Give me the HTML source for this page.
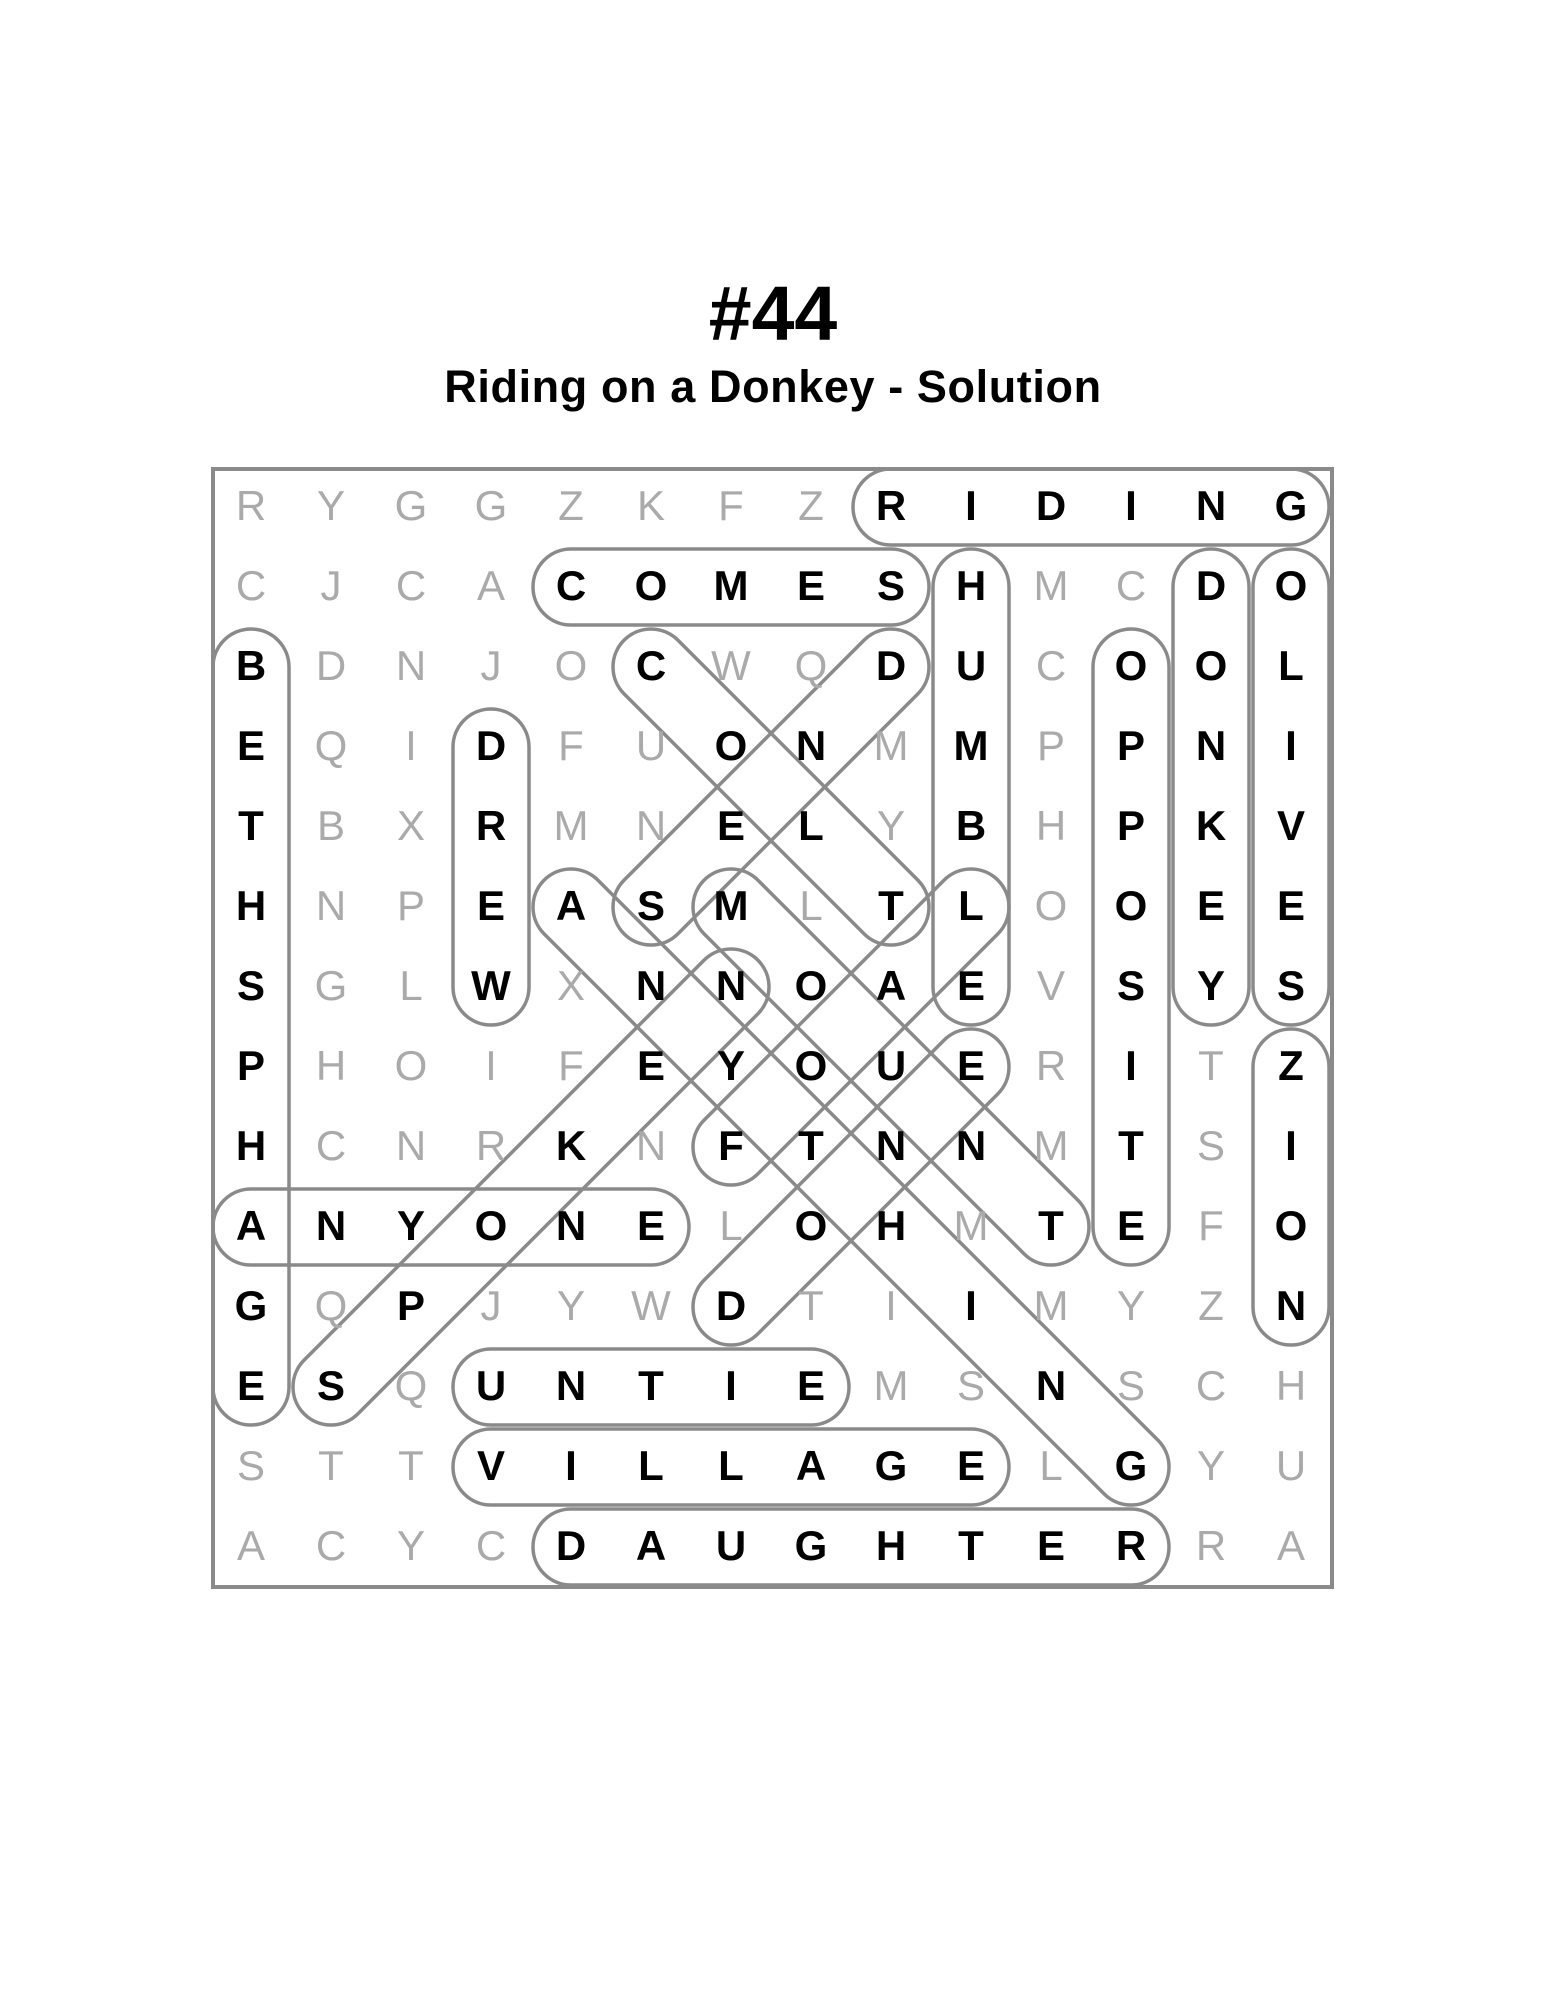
<!DOCTYPE html>
<html><head><meta charset="utf-8"><style>
html,body{margin:0;padding:0;background:#fff;}
svg{display:block;}
</style></head><body>
<svg width="1545" height="2000" viewBox="0 0 1545 2000" xmlns="http://www.w3.org/2000/svg">
<text x="773" y="340" text-anchor="middle" font-family="Liberation Sans, sans-serif" font-weight="bold" font-size="77" fill="#000">#44</text>
<text x="773" y="402" text-anchor="middle" font-family="Liberation Sans, sans-serif" font-weight="bold" font-size="45" letter-spacing="0.6" fill="#000">Riding on a Donkey - Solution</text>
<rect x="213" y="469" width="1119" height="1118" fill="none" stroke="#8a8a8a" stroke-width="4"/>
<g transform="translate(-2,-2)">
<g fill="none" stroke="#8a8a8a" stroke-width="3.5">
<rect x="-38" y="-38" width="476" height="76" rx="38" transform="translate(893,509)"/>
<rect x="-38" y="-38" width="396" height="76" rx="38" transform="translate(573,589)"/>
<rect x="-38" y="-38" width="476" height="76" rx="38" transform="translate(973,589) rotate(90)"/>
<rect x="-38" y="-38" width="476" height="76" rx="38" transform="translate(1213,589) rotate(90)"/>
<rect x="-38" y="-38" width="476" height="76" rx="38" transform="translate(1293,589) rotate(90)"/>
<rect x="-38" y="-38" width="796" height="76" rx="38" transform="translate(253,669) rotate(90)"/>
<rect x="-38" y="-38" width="636" height="76" rx="38" transform="translate(1133,669) rotate(90)"/>
<rect x="-38" y="-38" width="316" height="76" rx="38" transform="translate(493,749) rotate(90)"/>
<rect x="-38" y="-38" width="316" height="76" rx="38" transform="translate(1293,1069) rotate(90)"/>
<rect x="-38" y="-38" width="476" height="76" rx="38" transform="translate(253,1229)"/>
<rect x="-38" y="-38" width="396" height="76" rx="38" transform="translate(493,1389)"/>
<rect x="-38" y="-38" width="556" height="76" rx="38" transform="translate(493,1469)"/>
<rect x="-38" y="-38" width="636" height="76" rx="38" transform="translate(573,1549)"/>
<rect x="-38" y="-38" width="415.4" height="76" rx="38" transform="translate(653,669) rotate(45)"/>
<rect x="-38" y="-38" width="415.4" height="76" rx="38" transform="translate(653,909) rotate(-45)"/>
<rect x="-38" y="-38" width="641.7" height="76" rx="38" transform="translate(333,1389) rotate(-45)"/>
<rect x="-38" y="-38" width="868" height="76" rx="38" transform="translate(573,909) rotate(45)"/>
<rect x="-38" y="-38" width="528.5" height="76" rx="38" transform="translate(733,909) rotate(45)"/>
<rect x="-38" y="-38" width="415.4" height="76" rx="38" transform="translate(733,1149) rotate(-45)"/>
<rect x="-38" y="-38" width="415.4" height="76" rx="38" transform="translate(733,1309) rotate(-45)"/>
</g>
<g font-family="Liberation Sans, sans-serif" font-size="42" text-anchor="middle" transform="translate(0,-2)">
<text y="524" fill="#aaa"><tspan x="253">R</tspan><tspan x="333">Y</tspan><tspan x="413">G</tspan><tspan x="493">G</tspan><tspan x="573">Z</tspan><tspan x="653">K</tspan><tspan x="733">F</tspan><tspan x="813">Z</tspan></text>
<text y="524" fill="#000" font-weight="bold"><tspan x="893">R</tspan><tspan x="973">I</tspan><tspan x="1053">D</tspan><tspan x="1133">I</tspan><tspan x="1213">N</tspan><tspan x="1293">G</tspan></text>

<text y="604" fill="#aaa"><tspan x="253">C</tspan><tspan x="333">J</tspan><tspan x="413">C</tspan><tspan x="493">A</tspan><tspan x="1053">M</tspan><tspan x="1133">C</tspan></text>
<text y="604" fill="#000" font-weight="bold"><tspan x="573">C</tspan><tspan x="653">O</tspan><tspan x="733">M</tspan><tspan x="813">E</tspan><tspan x="893">S</tspan><tspan x="973">H</tspan><tspan x="1213">D</tspan><tspan x="1293">O</tspan></text>

<text y="684" fill="#aaa"><tspan x="333">D</tspan><tspan x="413">N</tspan><tspan x="493">J</tspan><tspan x="573">O</tspan><tspan x="733">W</tspan><tspan x="813">Q</tspan><tspan x="1053">C</tspan></text>
<text y="684" fill="#000" font-weight="bold"><tspan x="253">B</tspan><tspan x="653">C</tspan><tspan x="893">D</tspan><tspan x="973">U</tspan><tspan x="1133">O</tspan><tspan x="1213">O</tspan><tspan x="1293">L</tspan></text>

<text y="764" fill="#aaa"><tspan x="333">Q</tspan><tspan x="413">I</tspan><tspan x="573">F</tspan><tspan x="653">U</tspan><tspan x="893">M</tspan><tspan x="1053">P</tspan></text>
<text y="764" fill="#000" font-weight="bold"><tspan x="253">E</tspan><tspan x="493">D</tspan><tspan x="733">O</tspan><tspan x="813">N</tspan><tspan x="973">M</tspan><tspan x="1133">P</tspan><tspan x="1213">N</tspan><tspan x="1293">I</tspan></text>

<text y="844" fill="#aaa"><tspan x="333">B</tspan><tspan x="413">X</tspan><tspan x="573">M</tspan><tspan x="653">N</tspan><tspan x="893">Y</tspan><tspan x="1053">H</tspan></text>
<text y="844" fill="#000" font-weight="bold"><tspan x="253">T</tspan><tspan x="493">R</tspan><tspan x="733">E</tspan><tspan x="813">L</tspan><tspan x="973">B</tspan><tspan x="1133">P</tspan><tspan x="1213">K</tspan><tspan x="1293">V</tspan></text>

<text y="924" fill="#aaa"><tspan x="333">N</tspan><tspan x="413">P</tspan><tspan x="813">L</tspan><tspan x="1053">O</tspan></text>
<text y="924" fill="#000" font-weight="bold"><tspan x="253">H</tspan><tspan x="493">E</tspan><tspan x="573">A</tspan><tspan x="653">S</tspan><tspan x="733">M</tspan><tspan x="893">T</tspan><tspan x="973">L</tspan><tspan x="1133">O</tspan><tspan x="1213">E</tspan><tspan x="1293">E</tspan></text>

<text y="1004" fill="#aaa"><tspan x="333">G</tspan><tspan x="413">L</tspan><tspan x="573">X</tspan><tspan x="1053">V</tspan></text>
<text y="1004" fill="#000" font-weight="bold"><tspan x="253">S</tspan><tspan x="493">W</tspan><tspan x="653">N</tspan><tspan x="733">N</tspan><tspan x="813">O</tspan><tspan x="893">A</tspan><tspan x="973">E</tspan><tspan x="1133">S</tspan><tspan x="1213">Y</tspan><tspan x="1293">S</tspan></text>

<text y="1084" fill="#aaa"><tspan x="333">H</tspan><tspan x="413">O</tspan><tspan x="493">I</tspan><tspan x="573">F</tspan><tspan x="1053">R</tspan><tspan x="1213">T</tspan></text>
<text y="1084" fill="#000" font-weight="bold"><tspan x="253">P</tspan><tspan x="653">E</tspan><tspan x="733">Y</tspan><tspan x="813">O</tspan><tspan x="893">U</tspan><tspan x="973">E</tspan><tspan x="1133">I</tspan><tspan x="1293">Z</tspan></text>

<text y="1164" fill="#aaa"><tspan x="333">C</tspan><tspan x="413">N</tspan><tspan x="493">R</tspan><tspan x="653">N</tspan><tspan x="1053">M</tspan><tspan x="1213">S</tspan></text>
<text y="1164" fill="#000" font-weight="bold"><tspan x="253">H</tspan><tspan x="573">K</tspan><tspan x="733">F</tspan><tspan x="813">T</tspan><tspan x="893">N</tspan><tspan x="973">N</tspan><tspan x="1133">T</tspan><tspan x="1293">I</tspan></text>

<text y="1244" fill="#aaa"><tspan x="733">L</tspan><tspan x="973">M</tspan><tspan x="1213">F</tspan></text>
<text y="1244" fill="#000" font-weight="bold"><tspan x="253">A</tspan><tspan x="333">N</tspan><tspan x="413">Y</tspan><tspan x="493">O</tspan><tspan x="573">N</tspan><tspan x="653">E</tspan><tspan x="813">O</tspan><tspan x="893">H</tspan><tspan x="1053">T</tspan><tspan x="1133">E</tspan><tspan x="1293">O</tspan></text>

<text y="1324" fill="#aaa"><tspan x="333">Q</tspan><tspan x="493">J</tspan><tspan x="573">Y</tspan><tspan x="653">W</tspan><tspan x="813">T</tspan><tspan x="893">I</tspan><tspan x="1053">M</tspan><tspan x="1133">Y</tspan><tspan x="1213">Z</tspan></text>
<text y="1324" fill="#000" font-weight="bold"><tspan x="253">G</tspan><tspan x="413">P</tspan><tspan x="733">D</tspan><tspan x="973">I</tspan><tspan x="1293">N</tspan></text>

<text y="1404" fill="#aaa"><tspan x="413">Q</tspan><tspan x="893">M</tspan><tspan x="973">S</tspan><tspan x="1133">S</tspan><tspan x="1213">C</tspan><tspan x="1293">H</tspan></text>
<text y="1404" fill="#000" font-weight="bold"><tspan x="253">E</tspan><tspan x="333">S</tspan><tspan x="493">U</tspan><tspan x="573">N</tspan><tspan x="653">T</tspan><tspan x="733">I</tspan><tspan x="813">E</tspan><tspan x="1053">N</tspan></text>

<text y="1484" fill="#aaa"><tspan x="253">S</tspan><tspan x="333">T</tspan><tspan x="413">T</tspan><tspan x="1053">L</tspan><tspan x="1213">Y</tspan><tspan x="1293">U</tspan></text>
<text y="1484" fill="#000" font-weight="bold"><tspan x="493">V</tspan><tspan x="573">I</tspan><tspan x="653">L</tspan><tspan x="733">L</tspan><tspan x="813">A</tspan><tspan x="893">G</tspan><tspan x="973">E</tspan><tspan x="1133">G</tspan></text>

<text y="1564" fill="#aaa"><tspan x="253">A</tspan><tspan x="333">C</tspan><tspan x="413">Y</tspan><tspan x="493">C</tspan><tspan x="1213">R</tspan><tspan x="1293">A</tspan></text>
<text y="1564" fill="#000" font-weight="bold"><tspan x="573">D</tspan><tspan x="653">A</tspan><tspan x="733">U</tspan><tspan x="813">G</tspan><tspan x="893">H</tspan><tspan x="973">T</tspan><tspan x="1053">E</tspan><tspan x="1133">R</tspan></text>
</g>
</g>
</svg>
</body></html>
